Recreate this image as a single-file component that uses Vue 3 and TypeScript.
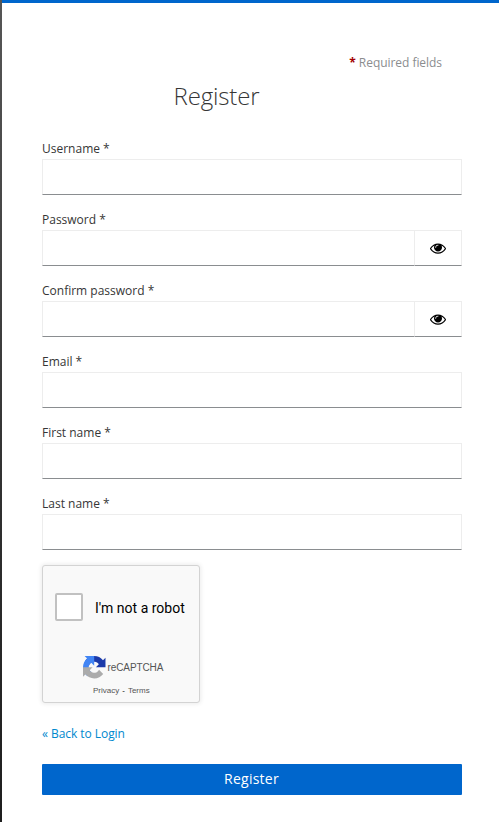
<script setup lang="ts">
import { ref } from 'vue'

interface Field {
  id: string
  label: string
  secret?: boolean
}

const fields: Field[] = [
  { id: 'username', label: 'Username' },
  { id: 'password', label: 'Password', secret: true },
  { id: 'password-confirm', label: 'Confirm password', secret: true },
  { id: 'email', label: 'Email' },
  { id: 'firstName', label: 'First name' },
  { id: 'lastName', label: 'Last name' },
]

const values = ref<Record<string, string>>({})
const revealed = ref<Record<string, boolean>>({})
const toggle = (id: string) => {
  revealed.value[id] = !revealed.value[id]
}
</script>

<template>
  <div class="page">
    <main class="card">
      <p class="required"><span class="star">*</span> Required fields</p>
      <h1 class="title">Register</h1>
      <form class="form" @submit.prevent>
        <div v-for="f in fields" :key="f.id" class="field">
          <label class="label" :for="f.id">{{ f.label }} *</label>
          <div class="control">
            <input
              :id="f.id"
              v-model="values[f.id]"
              class="input"
              :type="f.secret && !revealed[f.id] ? 'password' : 'text'"
            />
            <button v-if="f.secret" type="button" class="reveal" aria-label="Show password" @click="toggle(f.id)">
              <svg class="eye" viewBox="0 0 1792 1792">
                <path
                  d="M1664 960q-152-236-381-353 61 104 61 225 0 185-131.5 316.5t-316.5 131.5-316.5-131.5-131.5-316.5q0-121 61-225-229 117-381 353 133 205 333.5 326.5t434.5 121.5 434.5-121.5 333.5-326.5zm-720-384q0-20-14-34t-34-14q-125 0-214.5 89.5t-89.5 214.5q0 20 14 34t34 14 34-14 14-34q0-86 61-147t147-61q20 0 34-14t14-34zm848 384q0 34-20 69-140 230-376.5 368.5t-499.5 138.5-499.5-139-376.5-368q-20-35-20-69t20-69q140-229 376.5-368t499.5-139 499.5 139 376.5 368q20 35 20 69z"
                />
              </svg>
            </button>
          </div>
        </div>

        <div class="captcha">
          <div class="check-row">
            <span class="checkbox" role="checkbox" aria-checked="false"></span>
            <span class="check-text">I'm not a robot</span>
          </div>
          <div class="brand">
            <svg class="brand-logo" viewBox="0 0 64 64">
              <path fill="#1c3aa9" d="M64 31.955l-.033-1.37V4.687l-7.16 7.16C50.948 4.674 42.033.093 32.05.093c-10.4 0-19.622 4.96-25.458 12.64l11.736 11.86a15.55 15.55 0 0 1 4.754-5.334c2.05-1.6 4.952-2.906 8.968-2.906.485 0 .86.057 1.135.163 4.976.393 9.288 3.14 11.828 7.124l-8.307 8.307L64 31.953" />
              <path fill="#4285f4" d="M31.862.094l-1.37.033H4.594l7.16 7.16C4.58 13.147 0 22.06 0 32.046c0 10.4 4.96 19.622 12.64 25.458L24.5 45.768a15.55 15.55 0 0 1-5.334-4.754c-1.6-2.05-2.906-4.952-2.906-8.968 0-.485.057-.86.163-1.135.393-4.976 3.14-9.288 7.124-11.828l8.307 8.307L31.86.095" />
              <path fill="#ababab" d="M.001 32.045l.033 1.37v25.898l7.16-7.16c5.86 7.173 14.774 11.754 24.76 11.754 10.4 0 19.622-4.96 25.458-12.64l-11.736-11.86a15.55 15.55 0 0 1-4.754 5.334c-2.05 1.6-4.952 2.906-8.968 2.906-.485 0-.86-.057-1.135-.163-4.976-.393-9.288-3.14-11.828-7.124l8.307-8.307c-10.522.04-22.4.066-27.295-.005" />
            </svg>
            <span>reCAPTCHA</span>
          </div>
          <div class="legal"><span>Privacy</span><span class="dash">-</span><span>Terms</span></div>
        </div>

        <a class="back" href="#">« Back to Login</a>
        <button class="submit" type="submit">Register</button>
      </form>
    </main>
  </div>
</template>

<style>
body {
  background: #fff;
}
</style>

<style scoped>
.page {
  box-sizing: border-box;
  height: 822px;
  padding-left: 2px;
  overflow: hidden;
  background: linear-gradient(#565656 0, #484848 200px, #303030 500px, #1e1e1e 822px);
  font-family: 'Open Sans', sans-serif;
  color: #363636;
}
.card {
  box-sizing: border-box;
  height: 100%;
  padding: 51px 37px 0 40px;
  border-top: 3px solid #06c;
  background: #fff;
}
.required {
  margin: 0 20px 0 0;
  font-size: 12px;
  line-height: 18px;
  letter-spacing: -0.05px;
  text-align: right;
  color: #8b8d8f;
}
.star {
  color: #a30000;
  font-weight: 700;
}
.title {
  margin: 8px 0 0;
  padding-right: 71px;
  font-size: 24px;
  line-height: 32px;
  font-weight: 300;
  letter-spacing: -0.15px;
  text-align: center;
}
.form {
  display: flex;
  flex-direction: column;
  margin-top: 28px;
}
.field {
  height: 71px;
}
.label {
  display: block;
  height: 19px;
  font-size: 12px;
  line-height: 18px;
}
.control {
  display: flex;
  height: 36px;
}
.input {
  box-sizing: border-box;
  flex: 1;
  min-width: 0;
  height: 36px;
  padding: 5px 8px;
  border: 1px solid #ededed;
  border-bottom-color: #8a8d90;
  border-radius: 0;
  outline: 0;
  background: #fff;
  font: 14px 'Open Sans', sans-serif;
}
.reveal {
  box-sizing: border-box;
  display: flex;
  align-items: center;
  justify-content: center;
  width: 47px;
  height: 36px;
  padding: 0;
  border: 1px solid #ededed;
  border-left: 0;
  border-bottom-color: #8a8d90;
  background: #fff;
}
.eye {
  width: 16px;
  height: 16px;
  fill: #000;
}
.captcha {
  box-sizing: border-box;
  display: flex;
  flex-direction: column;
  width: 158px;
  height: 138px;
  margin-top: -1px;
  padding: 27px 0 0 12px;
  border: 1px solid #d3d3d3;
  border-radius: 3px;
  background: #f9f9f9;
  box-shadow: 0 0 4px 1px rgba(0, 0, 0, 0.08);
}
.check-row {
  display: flex;
  align-items: center;
  gap: 12px;
  height: 28px;
}
.checkbox {
  box-sizing: border-box;
  width: 28px;
  height: 28px;
  border: 2px solid #c1c1c1;
  border-radius: 2px;
  background: #fff;
}
.check-text {
  font: 14px/17px Roboto, sans-serif;
  padding-top: 2px;
  color: #000;
  white-space: nowrap;
}
.brand {
  display: flex;
  align-items: center;
  gap: 2px;
  height: 23px;
  margin: 35px 0 0 28px;
  font: 10px 'Liberation Sans', sans-serif;
  letter-spacing: -0.1px;
  color: #555;
}
.brand-logo {
  width: 22.5px;
  height: 22.5px;
}
.legal {
  display: flex;
  gap: 3px;
  margin: 7px 0 0 38px;
  font: 8px/10px 'Liberation Sans', sans-serif;
  color: #555;
}
.dash {
  color: #000;
}
.back {
  align-self: flex-start;
  margin-top: 22px;
  font-size: 12px;
  line-height: 18px;
  letter-spacing: -0.05px;
  color: #0088ce;
  text-decoration: none;
}
.submit {
  height: 31px;
  margin-top: 21px;
  padding: 0 1px 2px 0;
  border: 0;
  border-radius: 1px;
  background: #06c;
  color: #fff;
  font: 14px/29px 'Open Sans', sans-serif;
  letter-spacing: 0.25px;
}
</style>
